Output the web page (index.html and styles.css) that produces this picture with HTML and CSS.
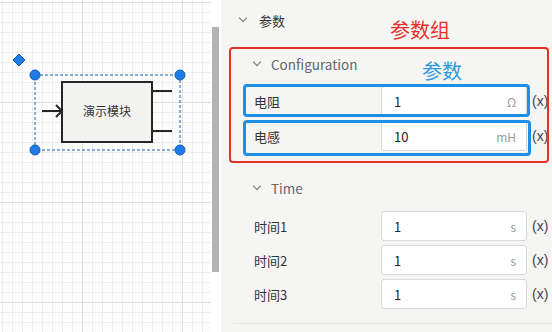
FILE: index.html
```html
<!DOCTYPE html>
<html lang="zh-CN">
<head>
  <meta charset="UTF-8" />
  <title>参数面板</title>
  <link rel="stylesheet" href="styles.css">
</head>
<body>
  <div class="app">

    <!-- canvas with the selected block -->
    <div class="canvas">
      <svg class="diagram" width="200" height="170" viewBox="0 0 200 170">
        <rect x="62" y="82" width="90" height="60" fill="#f2f2f0" stroke="#262626" stroke-width="2"/>
        <text x="107" y="116" text-anchor="middle" class="block-name">演示模块</text>
        <path d="M42 111 H61 M56 105 L62 111 L56 117" fill="none" stroke="#262626" stroke-width="2"/>
        <path d="M152 91 H172 M152 131 H172" stroke="#262626" stroke-width="2"/>
        <rect x="35" y="75" width="145" height="75" fill="none" stroke="#1a5fb4" stroke-width="1" stroke-dasharray="3 2"/>
        <circle cx="35" cy="75" r="5" fill="#1e7ce8" stroke="#1559b8"/>
        <circle cx="180" cy="75" r="5" fill="#1e7ce8" stroke="#1559b8"/>
        <circle cx="35" cy="150" r="5" fill="#1e7ce8" stroke="#1559b8"/>
        <circle cx="180" cy="150" r="5" fill="#1e7ce8" stroke="#1559b8"/>
        <path d="M19 54 L25 60 L19 66 L13 60 Z" fill="#1e7ce8" stroke="#1559b8"/>
      </svg>
    </div>

    <div class="scroll"><div class="thumb"></div></div>

    <!-- property panel -->
    <div class="panel">
      <div class="title"><span class="chev"></span>参数</div>

      <div class="group">
        <div class="sub"><span class="chev"></span>Configuration</div>
        <div class="row first">
          <span class="label">电阻</span>
          <div class="input"><span>1</span><span class="unit">Ω</span></div>
          <span class="expr">(x)</span>
        </div>
        <div class="row">
          <span class="label">电感</span>
          <div class="input"><span>10</span><span class="unit">mH</span></div>
          <span class="expr">(x)</span>
        </div>
      </div>

      <div class="group">
        <div class="sub"><span class="chev"></span>Time</div>
        <div class="row first">
          <span class="label">时间1</span>
          <div class="input"><span>1</span><span class="unit">s</span></div>
          <span class="expr">(x)</span>
        </div>
        <div class="row">
          <span class="label">时间2</span>
          <div class="input"><span>1</span><span class="unit">s</span></div>
          <span class="expr">(x)</span>
        </div>
        <div class="row">
          <span class="label">时间3</span>
          <div class="input"><span>1</span><span class="unit">s</span></div>
          <span class="expr">(x)</span>
        </div>
      </div>
      <div class="divider"></div>

      <!-- annotations drawn over the panel -->
      <div class="note note-group">参数组</div>
      <div class="note note-param">参数</div>
      <div class="box box-group"></div>
      <div class="box box-p1"></div>
      <div class="box box-p2"></div>
    </div>

  </div>
</body>
</html>
```

FILE: styles.css
```css
* { margin: 0; padding: 0; box-sizing: border-box; }
html, body {
  width: 552px;
  height: 332px;
  overflow: hidden;
  font-family: "Noto Sans CJK SC", "Noto Sans", sans-serif;
  background: #fff;
}

.app {
  display: flex;
  height: 332px;
}

/* grid canvas */
.canvas {
  position: relative;
  width: 211px;
  height: 332px;
  background-color: #fdfdfd;
  background-image:
    linear-gradient(#dedede 1px, transparent 1px),
    linear-gradient(90deg, #dedede 1px, transparent 1px),
    linear-gradient(#eeeeee 1px, transparent 1px),
    linear-gradient(90deg, #eeeeee 1px, transparent 1px);
  background-size: 100px 100px, 100px 100px, 10px 10px, 10px 10px;
  background-position: 0 2px, 82px 0, 0 2px, 2px 0;
}
.diagram {
  position: absolute;
  top: 0;
  left: 0;
}
.block-name {
  font-size: 12px;
  fill: #333;
  font-family: "Noto Sans CJK SC", sans-serif;
}

.scroll {
  width: 10px;
  padding-top: 27px;
  background: #fff;
}
.thumb {
  margin-left: 1px;
  width: 7px;
  height: 245px;
  background: #b3b3b3;
}

/* property panel */
.panel {
  position: relative;
  flex: 1;
  background: #f5f5f3;
  font-size: 13px;
  color: #333;
}
.title {
  display: flex;
  align-items: center;
  height: 40px;
  padding-left: 17px;
  color: #333;
}
.chev {
  display: inline-block;
  width: 6px;
  height: 6px;
  border-right: 1.3px solid #777;
  border-bottom: 1.3px solid #777;
  transform: rotate(45deg);
  margin: -4px 13px 0 2px;
}

.group {
  margin-top: 7px;
}
.group + .group {
  margin-top: 20px;
}
.sub {
  display: flex;
  align-items: center;
  height: 34px;
  padding-left: 31px;
  color: #666;
  font-size: 13.5px;
}
.sub .chev { margin-right: 11px; }

.row {
  display: flex;
  align-items: center;
  height: 30px;
  margin-top: 5px;
  padding-left: 33px;
}
.group + .group .row { margin-top: 4px; }
.group + .group .row.first { margin-top: 6px; }

.label {
  width: 127px;
  color: #333;
}
.input {
  display: flex;
  justify-content: space-between;
  align-items: center;
  width: 146px;
  height: 30px;
  padding: 0 10px 0 12px;
  background: #fff;
  border: 1px solid #d8d8d8;
  border-radius: 3px;
  color: #222;
}
.unit {
  font-size: 12px;
  color: #9a9a9a;
}
.expr {
  margin-left: 5px;
  color: #444;
  font-family: "Liberation Sans", sans-serif;
  font-size: 14px;
}

.divider {
  margin: 14px 0 0 12px;
  height: 1px;
  background: #e2e2e2;
}

/* annotations */
.note {
  position: absolute;
  font-size: 20px;
  line-height: 24px;
}
.note-group {
  left: 169px;
  top: 18px;
  color: #e8302a;
}
.note-param {
  left: 201px;
  top: 59px;
  color: #2d9be0;
}
.box {
  position: absolute;
  border-radius: 4px;
}
.box-group {
  left: 8px;
  top: 47px;
  width: 320px;
  height: 116px;
  border: 2px solid #e8302a;
}
.box-p1 {
  left: 22px;
  top: 84px;
  width: 287px;
  height: 33px;
  border: 3px solid #1e8fe6;
}
.box-p2 {
  left: 22px;
  top: 120px;
  width: 288px;
  height: 36px;
  border: 3px solid #1e8fe6;
}
```
